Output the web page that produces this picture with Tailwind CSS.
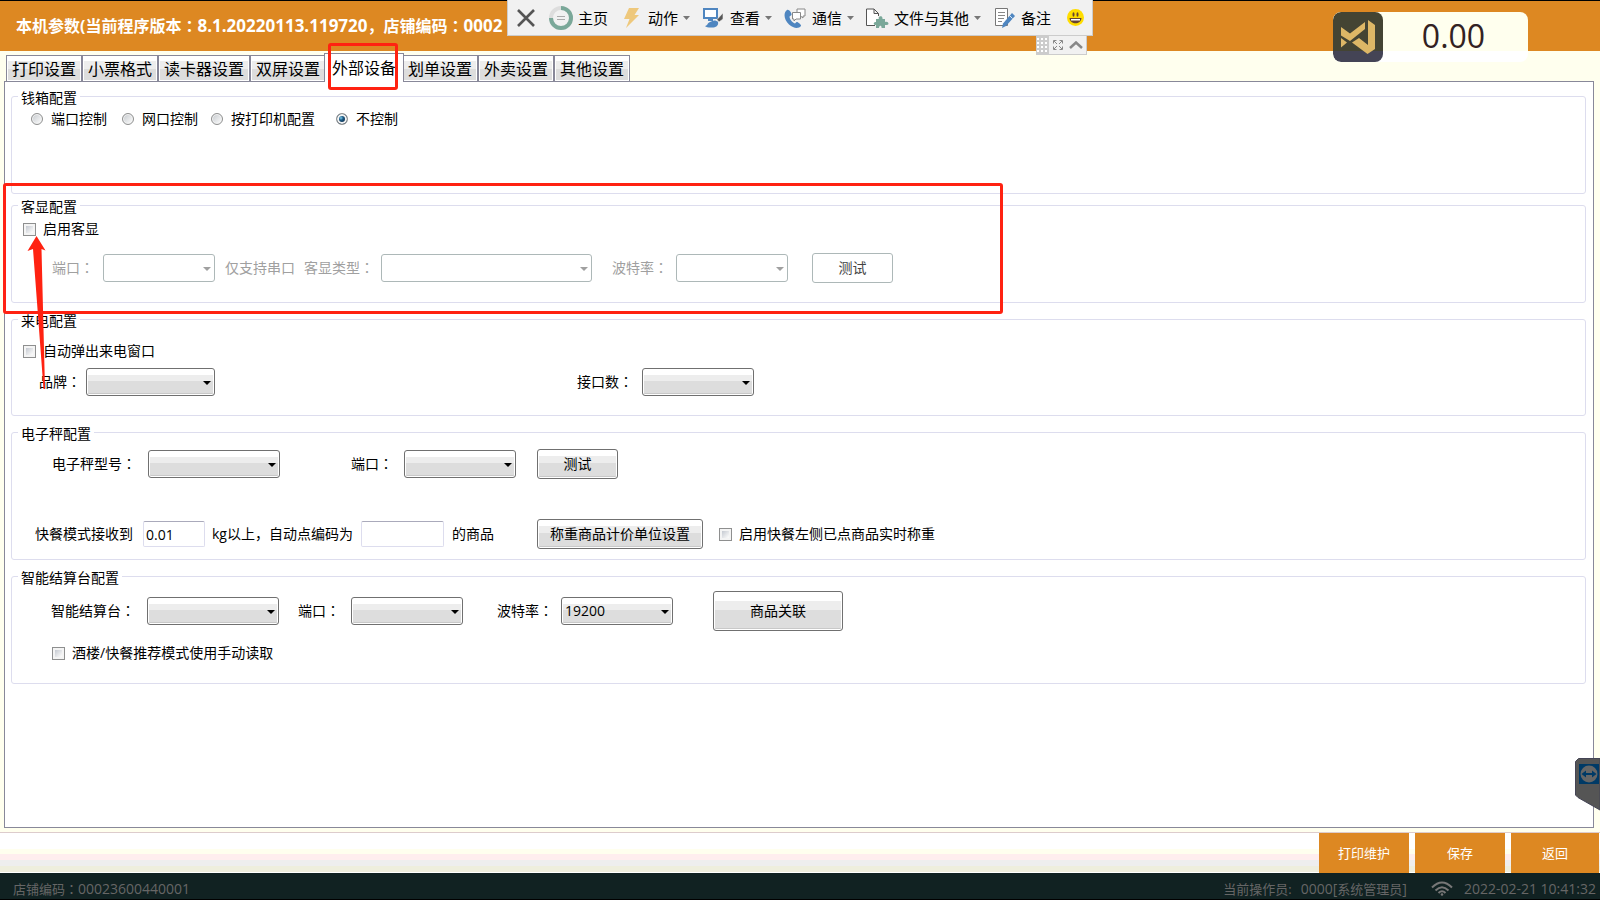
<!DOCTYPE html>
<html lang="zh-CN">
<head>
<meta charset="utf-8">
<meta name="viewport" content="width=device-width, initial-scale=1">
<title>本机参数</title>
<script src="https://cdn.jsdelivr.net/npm/@tailwindcss/browser@4"></script>
</head>
<body class="relative flex min-h-screen flex-col overflow-x-hidden bg-[#ffffee] font-['Open_Sans','Noto_Sans_CJK_SC',sans-serif] text-[14px] leading-[20px] text-black">

<header class="flex h-[51px] shrink-0 items-center border-t border-black bg-[#dd8822] px-4">
  <h1 class="text-[16px] leading-[24px] font-bold whitespace-nowrap text-white">本机参数(当前程序版本<span lang="zh-TW">：</span><span class="text-[17px]">8.1.20220113.119720</span>，店铺编码<span lang="zh-TW">：</span><span class="text-[17px]">0002</span></h1>
</header>

<nav class="z-10 flex h-[30px] shrink-0 items-end pl-[6px] text-[16px] leading-[24px]" role="tablist">
  <button role="tab" class="h-[26px] border border-b-0 border-[#888899] bg-[linear-gradient(#fff_20%,#ededed_20%,#ededed_50%,#dddddd_50%)] px-[5px] shadow-[inset_0_0_0_1px_#fff]">打印设置</button>
  <button role="tab" class="h-[26px] border border-b-0 border-[#888899] bg-[linear-gradient(#fff_20%,#ededed_20%,#ededed_50%,#dddddd_50%)] px-[5px] shadow-[inset_0_0_0_1px_#fff]">小票格式</button>
  <button role="tab" class="h-[26px] border border-b-0 border-[#888899] bg-[linear-gradient(#fff_20%,#ededed_20%,#ededed_50%,#dddddd_50%)] px-[5px] shadow-[inset_0_0_0_1px_#fff]">读卡器设置</button>
  <button role="tab" class="h-[26px] border border-b-0 border-[#888899] bg-[linear-gradient(#fff_20%,#ededed_20%,#ededed_50%,#dddddd_50%)] px-[5px] shadow-[inset_0_0_0_1px_#fff]">双屏设置</button>
  <button role="tab" aria-selected="true" class="z-10 -mx-[2px] -mb-px h-[29px] border border-b-0 border-[#888899] bg-white px-[7px]">外部设备</button>
  <button role="tab" class="h-[26px] border border-b-0 border-[#888899] bg-[linear-gradient(#fff_20%,#ededed_20%,#ededed_50%,#dddddd_50%)] px-[5px] shadow-[inset_0_0_0_1px_#fff]">划单设置</button>
  <button role="tab" class="h-[26px] border border-b-0 border-[#888899] bg-[linear-gradient(#fff_20%,#ededed_20%,#ededed_50%,#dddddd_50%)] px-[5px] shadow-[inset_0_0_0_1px_#fff]">外卖设置</button>
  <button role="tab" class="h-[26px] border border-b-0 border-[#888899] bg-[linear-gradient(#fff_20%,#ededed_20%,#ededed_50%,#dddddd_50%)] px-[5px] shadow-[inset_0_0_0_1px_#fff]">其他设置</button>
</nav>

<main class="mr-[6px] mb-1 ml-1 flex grow flex-col border border-[#888899] bg-white pt-1 pr-[7px] pl-[6px] whitespace-nowrap">

  <fieldset class="min-h-[108px] rounded-[3px] border border-[#ddddee]">
    <legend class="ml-[6px] px-[3px] pt-1 leading-[16px]">钱箱配置</legend>
    <div class="mt-[3px] flex items-center pl-[19px]">
      <label class="flex items-center gap-2"><input type="radio" name="drawer" class="size-3 appearance-none rounded-full border border-[#8e8f8f] bg-[linear-gradient(135deg,#c4c8cc,#ffffff)] shadow-[inset_0_0_0_1px_#f4f4f4]">端口控制</label>
      <label class="ml-[15px] flex items-center gap-2"><input type="radio" name="drawer" class="size-3 appearance-none rounded-full border border-[#8e8f8f] bg-[linear-gradient(135deg,#c4c8cc,#ffffff)] shadow-[inset_0_0_0_1px_#f4f4f4]">网口控制</label>
      <label class="ml-[13px] flex items-center gap-2"><input type="radio" name="drawer" class="size-3 appearance-none rounded-full border border-[#8e8f8f] bg-[linear-gradient(135deg,#c4c8cc,#ffffff)] shadow-[inset_0_0_0_1px_#f4f4f4]">按打印机配置</label>
      <label class="ml-[21px] flex items-center gap-2"><input type="radio" name="drawer" checked class="size-3 appearance-none rounded-full border border-[#8e8f8f] bg-[radial-gradient(circle_at_40%_40%,#7fd0f0_0,#1d5a85_25%,#0c2c49_60%)] shadow-[inset_0_0_0_2px_#f4f4f4]">不控制</label>
    </div>
  </fieldset>

  <fieldset class="mt-px min-h-[108px] rounded-[3px] border border-[#ddddee]">
    <legend class="ml-[6px] px-[3px] pt-1 leading-[16px]">客显配置</legend>
    <div class="mt-1 flex items-center pl-[11px]">
      <label class="flex items-center gap-[7px]"><input type="checkbox" class="size-[13px] appearance-none border border-[#8e8f8f] bg-[linear-gradient(135deg,#b4bac4,#f8f8f8_75%)] shadow-[inset_0_0_0_2px_#f4f4f4]">启用客显</label>
    </div>
    <div class="mt-[14px] flex h-[30px] items-center pl-10 text-[#a0a0a0]">
      <label for="cd-port">端口<span lang="zh-TW">：</span></label>
      <div class="relative ml-[9px] h-7 w-28"><select id="cd-port" disabled class="size-full appearance-none rounded-[3px] border border-[#adb8b8] bg-white px-1"></select><svg class="pointer-events-none absolute top-[13px] right-1 h-1 w-2" viewBox="0 0 8 4"><path d="M0 0h8L4 4z" fill="#a0a0a0"/></svg></div>
      <span class="ml-[10px]">仅支持串口</span>
      <label for="cd-type" class="ml-[9px]">客显类型<span lang="zh-TW">：</span></label>
      <div class="relative ml-[7px] h-7 w-[211px]"><select id="cd-type" disabled class="size-full appearance-none rounded-[3px] border border-[#adb8b8] bg-white px-1"></select><svg class="pointer-events-none absolute top-[13px] right-1 h-1 w-2" viewBox="0 0 8 4"><path d="M0 0h8L4 4z" fill="#a0a0a0"/></svg></div>
      <label for="cd-baud" class="ml-5">波特率<span lang="zh-TW">：</span></label>
      <div class="relative ml-2 h-7 w-28"><select id="cd-baud" disabled class="size-full appearance-none rounded-[3px] border border-[#adb8b8] bg-white px-1"></select><svg class="pointer-events-none absolute top-[13px] right-1 h-1 w-2" viewBox="0 0 8 4"><path d="M0 0h8L4 4z" fill="#a0a0a0"/></svg></div>
      <button disabled class="ml-6 h-[30px] w-[81px] rounded-[3px] border border-[#adb8b8] bg-white text-[#444444]">测试</button>
    </div>
  </fieldset>

  <fieldset class="mt-[6px] min-h-[107px] rounded-[3px] border border-[#ddddee]">
    <legend class="ml-[6px] px-[3px] pt-1 leading-[16px]">来电配置</legend>
    <div class="mt-3 flex items-center pl-[11px]">
      <label class="flex items-center gap-[7px]"><input type="checkbox" class="size-[13px] appearance-none border border-[#8e8f8f] bg-[linear-gradient(135deg,#b4bac4,#f8f8f8_75%)] shadow-[inset_0_0_0_2px_#f4f4f4]">自动弹出来电窗口</label>
    </div>
    <div class="mt-[7px] flex h-7 items-center pl-[27px]">
      <label for="brand">品牌<span lang="zh-TW">：</span></label>
      <div class="relative ml-[5px] h-7 w-[129px]"><select id="brand" class="size-full appearance-none rounded-[3px] border border-[#707070] bg-[linear-gradient(#fff_23%,#ededed_23%,#ededed_47%,#dddddd_47%)] px-[3px] shadow-[inset_0_0_0_1px_#fff,inset_0_-2px_0_#c8c8c8]"></select><svg class="pointer-events-none absolute top-[13px] right-1 h-1 w-2" viewBox="0 0 8 4"><path d="M0 0h8L4 4z"/></svg></div>
      <label for="lines" class="ml-[362px]">接口数<span lang="zh-TW">：</span></label>
      <div class="relative ml-[9px] h-7 w-28"><select id="lines" class="size-full appearance-none rounded-[3px] border border-[#707070] bg-[linear-gradient(#fff_23%,#ededed_23%,#ededed_47%,#dddddd_47%)] px-[3px] shadow-[inset_0_0_0_1px_#fff,inset_0_-2px_0_#c8c8c8]"></select><svg class="pointer-events-none absolute top-[13px] right-1 h-1 w-2" viewBox="0 0 8 4"><path d="M0 0h8L4 4z"/></svg></div>
    </div>
  </fieldset>

  <fieldset class="mt-[6px] min-h-[138px] rounded-[3px] border border-[#ddddee]">
    <legend class="ml-[6px] px-[3px] pt-1 leading-[16px]">电子秤配置</legend>
    <div class="mt-[7px] flex h-[30px] items-center pl-10">
      <label for="scale">电子秤型号<span lang="zh-TW">：</span></label>
      <div class="relative ml-3 h-7 w-[132px]"><select id="scale" class="size-full appearance-none rounded-[3px] border border-[#707070] bg-[linear-gradient(#fff_23%,#ededed_23%,#ededed_47%,#dddddd_47%)] px-[3px] shadow-[inset_0_0_0_1px_#fff,inset_0_-2px_0_#c8c8c8]"></select><svg class="pointer-events-none absolute top-[13px] right-1 h-1 w-2" viewBox="0 0 8 4"><path d="M0 0h8L4 4z"/></svg></div>
      <label for="scale-port" class="ml-[71px]">端口<span lang="zh-TW">：</span></label>
      <div class="relative ml-[11px] h-7 w-28"><select id="scale-port" class="size-full appearance-none rounded-[3px] border border-[#707070] bg-[linear-gradient(#fff_23%,#ededed_23%,#ededed_47%,#dddddd_47%)] px-[3px] shadow-[inset_0_0_0_1px_#fff,inset_0_-2px_0_#c8c8c8]"></select><svg class="pointer-events-none absolute top-[13px] right-1 h-1 w-2" viewBox="0 0 8 4"><path d="M0 0h8L4 4z"/></svg></div>
      <button class="ml-[21px] h-[30px] w-[81px] rounded-[3px] border border-[#707070] bg-[linear-gradient(#fff_23%,#ededed_23%,#ededed_47%,#dddddd_47%)] shadow-[inset_0_0_0_1px_#fff,inset_0_-2px_0_#c8c8c8]">测试</button>
    </div>
    <div class="mt-10 flex h-[30px] items-center pl-[23px]">
      <label for="min-kg">快餐模式接收到</label>
      <input id="min-kg" type="text" value="0.01" class="ml-[10px] h-[26px] w-[62px] rounded-[2px] border border-[#ddddee] border-t-[#aaaabb] bg-white px-[2px]">
      <label for="item-code" class="ml-[7px]">kg以上，自动点编码为</label>
      <input id="item-code" type="text" class="ml-2 h-[26px] w-[83px] rounded-[2px] border border-[#ddddee] border-t-[#aaaabb] bg-white px-[2px]">
      <span class="ml-2">的商品</span>
      <button class="ml-[43px] h-[30px] w-[166px] rounded-[3px] border border-[#707070] bg-[linear-gradient(#fff_23%,#ededed_23%,#ededed_47%,#dddddd_47%)] shadow-[inset_0_0_0_1px_#fff,inset_0_-2px_0_#c8c8c8]">称重商品计价单位设置</button>
      <label class="ml-4 flex items-center gap-[7px]"><input type="checkbox" class="size-[13px] appearance-none border border-[#8e8f8f] bg-[linear-gradient(135deg,#b4bac4,#f8f8f8_75%)] shadow-[inset_0_0_0_2px_#f4f4f4]">启用快餐左侧已点商品实时称重</label>
    </div>
  </fieldset>

  <fieldset class="mt-[6px] min-h-[118px] rounded-[3px] border border-[#ddddee]">
    <legend class="ml-[6px] px-[3px] pt-1 leading-[16px]">智能结算台配置</legend>
    <div class="mt-[5px] flex h-10 items-center pl-[39px]">
      <label for="desk">智能结算台<span lang="zh-TW">：</span></label>
      <div class="relative ml-3 h-7 w-[132px]"><select id="desk" class="size-full appearance-none rounded-[3px] border border-[#707070] bg-[linear-gradient(#fff_23%,#ededed_23%,#ededed_47%,#dddddd_47%)] px-[3px] shadow-[inset_0_0_0_1px_#fff,inset_0_-2px_0_#c8c8c8]"></select><svg class="pointer-events-none absolute top-[13px] right-1 h-1 w-2" viewBox="0 0 8 4"><path d="M0 0h8L4 4z"/></svg></div>
      <label for="desk-port" class="ml-[19px]">端口<span lang="zh-TW">：</span></label>
      <div class="relative ml-[11px] h-7 w-28"><select id="desk-port" class="size-full appearance-none rounded-[3px] border border-[#707070] bg-[linear-gradient(#fff_23%,#ededed_23%,#ededed_47%,#dddddd_47%)] px-[3px] shadow-[inset_0_0_0_1px_#fff,inset_0_-2px_0_#c8c8c8]"></select><svg class="pointer-events-none absolute top-[13px] right-1 h-1 w-2" viewBox="0 0 8 4"><path d="M0 0h8L4 4z"/></svg></div>
      <label for="desk-baud" class="ml-[34px]">波特率<span lang="zh-TW">：</span></label>
      <div class="relative ml-2 h-7 w-28"><select id="desk-baud" class="size-full appearance-none rounded-[3px] border border-[#707070] bg-[linear-gradient(#fff_23%,#ededed_23%,#ededed_47%,#dddddd_47%)] px-[3px] shadow-[inset_0_0_0_1px_#fff,inset_0_-2px_0_#c8c8c8]"><option>19200</option></select><svg class="pointer-events-none absolute top-[13px] right-1 h-1 w-2" viewBox="0 0 8 4"><path d="M0 0h8L4 4z"/></svg></div>
      <button class="ml-10 h-10 w-[130px] rounded-[3px] border border-[#707070] bg-[linear-gradient(#fff_23%,#ededed_23%,#ededed_47%,#dddddd_47%)] shadow-[inset_0_0_0_1px_#fff,inset_0_-2px_0_#c8c8c8]">商品关联</button>
    </div>
    <div class="mt-3 flex items-center pl-10">
      <label class="flex items-center gap-[7px]"><input type="checkbox" class="size-[13px] appearance-none border border-[#8e8f8f] bg-[linear-gradient(135deg,#b4bac4,#f8f8f8_75%)] shadow-[inset_0_0_0_2px_#f4f4f4]">酒楼/快餐推荐模式使用手动读取</label>
    </div>
  </fieldset>
</main>

<section class="flex h-[41px] shrink-0 justify-end gap-[6px] border-t border-[#ddcccc] bg-[linear-gradient(#fff_16px,#ffffee_16px,#ffffee_21px,#ffeeee_21px,#ffeeee_27px,#eeeeee_27px,#eeeeee_33px,#eeeedd_33px,#eeeedd_39px,#fff_39px)] pr-px text-[13px] text-white">
  <button class="w-[90px] bg-[#dd8822]">打印维护</button>
  <button class="w-[90px] bg-[#dd8822]">保存</button>
  <button class="w-[88px] bg-[#dd8822]">返回</button>
</section>

<footer class="flex h-[27px] shrink-0 items-center border-b border-black bg-[#112222] pt-[5px] pr-1 pl-[13px] whitespace-nowrap text-[#666666]">
  <span class="mr-auto"><span class="text-[13px]">店铺编码<span lang="zh-TW">：</span></span>00023600440001</span>
  <span class="text-[13px]">当前操作员:</span>
  <span class="ml-[9px]">0000[<span class="text-[13px]">系统管理员</span>]</span>
  <svg class="ml-6 h-4 w-[22px]" viewBox="0 0 22 16" fill="none" stroke="#777" stroke-width="2"><path d="M1 6.500Q11-3.500 21 6.500M4.500 9.500Q11 3 17.500 9.500M7.500 12Q11 8.500 14.500 12"/><circle cx="11" cy="13.500" r="1.300" fill="#777" stroke="none"/></svg>
  <time class="ml-[11px]">2022-02-21 10:41:32</time>
</footer>

<!-- remote session toolbar -->
<div class="absolute top-0 left-[507px] z-20 flex h-9 w-[586px] items-center border-r border-b border-l border-[#cccccc] bg-[#f1f1f1] pl-[9px] text-[15px] whitespace-nowrap">
  <button aria-label="关闭" class="size-[18px]"><svg viewBox="0 0 18 18" class="size-full" stroke="#555" stroke-width="2.600"><path d="M1 1l16 16M17 1L1 17"/></svg></button>
  <button class="ml-[14px] flex items-center gap-[5px]"><svg class="size-6" viewBox="0 0 24 24" fill="none"><circle cx="12" cy="12" r="10" stroke="#ddd" stroke-width="4"/><path d="M12 2a10 10 0 1 1-10 10" stroke="#7aa899" stroke-width="4"/><path d="M8 10.500h8M8 13.500h8" stroke="#aaa"/></svg>主页</button>
  <button class="ml-4 flex items-center"><svg class="mr-2 h-5 w-4" viewBox="0 0 16 20"><path d="M5 0h10l-4.500 7H15L2 20l3.500-9H0z" fill="#eec87c"/></svg>动作<svg class="ml-[5px] h-1 w-[7px]" viewBox="0 0 7 4"><path d="M0 0h7L3.500 4z" fill="#777"/></svg></button>
  <button class="ml-[13px] flex items-center"><svg class="mr-[7px] h-5 w-5" viewBox="0 0 20 20"><path d="M1 1h13v9H1z" fill="#fff" stroke="#4f86c0" stroke-width="2"/><path d="M5 11h5v2H5z" fill="#4f86c0"/><path d="M2 18c3-.5 2-3 5-4 3-2 6-2 8 0 1 4-3 6-7 5.500C5 19.500 3 19 2 18z" fill="#4f86c0"/><path d="M20 5v6l-4 3-2-2.500z" fill="#555" stroke="#f1f1f1" stroke-width=".6"/></svg>查看<svg class="ml-[5px] h-1 w-[7px]" viewBox="0 0 7 4"><path d="M0 0h7L3.500 4z" fill="#777"/></svg></button>
  <button class="ml-3 flex items-center"><svg class="mr-[6px] h-5 w-[22px]" viewBox="0 0 22 20"><path d="M3 2C-1 5 0 12 5 16.500s10 4 12 1.500c.6-1-3-4.500-4.500-4L11 15.500C8 14.500 5.500 11 5.500 8.500l2-1.500C8 5 5 1 3 2z" fill="#4f86c0"/><path d="M13 4V1h8v7h-2v2l-2.500-2" fill="#fff" stroke="#888"/><path d="M8.500 4.500h8V11h-4.500l-2 2v-2H8.500z" fill="#fff" stroke="#888"/></svg>通信<svg class="ml-[5px] h-1 w-[7px]" viewBox="0 0 7 4"><path d="M0 0h7L3.500 4z" fill="#777"/></svg></button>
  <button class="ml-3 flex items-center"><svg class="mr-[5px] h-5 w-[23px]" viewBox="0 0 23 20"><path d="M9 17.500H.5V1H8l4.500 4.500V8M8 1v4.500h4.500" fill="#fff" stroke="#555"/><path d="M10 11h3c-1.500-3 4-4 3.500 0H19v3c3-1.500 5 2.500 2 3h-2v3h-3.500c.5-3-2.500-3-2.500 0h-3v-3c-3 .5-3-3.500 0-3z" fill="#7aa899"/></svg>文件与其他<svg class="ml-[5px] h-1 w-[7px]" viewBox="0 0 7 4"><path d="M0 0h7L3.500 4z" fill="#777"/></svg></button>
  <button class="ml-[14px] flex items-center gap-[6px]"><svg class="h-5 w-5" viewBox="0 0 20 20"><path d="M.5.500h12v17H.5z" fill="#fff" stroke="#777"/><path d="M3 4.500h7M3 7.500h7M3 10.500h6M3 13.500h4" stroke="#888"/><path d="M17 5l3 3-9 10-4 2 1-4.500z" fill="#4f86c0"/><path d="M14.500 7.500l3 3" stroke="#fff" stroke-width=".8"/></svg>备注</button>
  <button aria-label="反馈" class="ml-4 size-[17px]"><svg class="size-full" viewBox="0 0 17 17"><circle cx="8.500" cy="8.500" r="8.500" fill="#fd0"/><ellipse cx="6.500" cy="5.500" rx="1" ry="2.200" fill="#643"/><ellipse cx="10.500" cy="5.500" rx="1" ry="2.200" fill="#643"/><path d="M2.500 9h12c-.5 7-11.500 7-12 0z" fill="#643"/><path d="M4 10h9v1.500H4z" fill="#fff"/></svg></button>
</div>
<div class="absolute top-9 left-[1036px] z-20 flex h-[19px] w-[51px] items-center border-r border-b border-[#cccccc] bg-[#f1f1f1]">
  <svg class="h-full w-[13px] bg-[#cccccc]" viewBox="0 0 13 18"><path d="M1 3h11M1 7h11M1 11h11M1 15h11" stroke="#fff" stroke-width="2" stroke-dasharray="2 2"/></svg>
  <svg class="ml-1 size-[10px]" viewBox="0 0 10 10" fill="none" stroke="#888"><path d="M.5 3.500v-3h3M6.500.500h3v3M9.500 6.500v3h-3M3.500 9.500h-3v-3M1 1l3 3M9 1L6 4M9 9L6 6M1 9l3-3"/></svg>
  <svg class="ml-[6px] h-2 w-[14px]" viewBox="0 0 14 8" fill="none" stroke="#888" stroke-width="2.500"><path d="M1 7l6-5.500L13 7"/></svg>
</div>

<!-- floating amount widget -->
<div class="absolute top-3 left-[1333px] z-20 flex h-[50px] w-[195px] overflow-hidden rounded-[8px] bg-[linear-gradient(#ffffee_39px,#fff_39px)]">
  <svg class="size-[50px] shrink-0 rounded-[8px] bg-[linear-gradient(#444433_39px,#444455_39px)]" viewBox="0 0 50 50" fill="#ddb766"><path d="M8 15l9 6.500L32 10v7L17 29 8 23.500zM8 26l6 4.500L8 35.500zM35 8l7 5v24l-7.500 5L19 30.500l7-4.500 9 7z"/></svg>
  <output class="grow pr-1 text-center text-[32px] leading-[48px] text-[#332222]">0.00</output>
</div>

<!-- remote session side handle -->
<svg class="absolute top-[758px] right-0 z-20 h-[53px] w-[25px]" viewBox="0 0 25 53"><path d="M.5 3.500l3-3H25V52L3 39.500.5 37z" fill="#555" stroke="#444455"/><path d="M4 6h20v20H4z" fill="#003a66"/><circle cx="14" cy="16" r="8.500" fill="#666"/><path d="M6.500 16l4.500-3.500V15h6v-2.500l4.500 3.500-4.500 3.500V17h-6v2.500z" fill="#003a66"/></svg>

<!-- annotations -->
<div class="pointer-events-none absolute top-[43px] left-[328px] z-30 h-[47px] w-[70px] rounded-[3px] border-3 border-[#ff2211]"></div>
<div class="pointer-events-none absolute top-[183px] left-[3px] z-30 h-[131px] w-[1000px] rounded-[3px] border-3 border-[#ff2211]"></div>
<svg class="pointer-events-none absolute top-[236px] left-[27px] z-30 h-[154px] w-5" viewBox="0 0 20 154"><path d="M9.500 0L18.500 14.500 14.500 13 18 153h-1.500L6 13 .5 15z" fill="#ff2211"/></svg>
</body>
</html>
